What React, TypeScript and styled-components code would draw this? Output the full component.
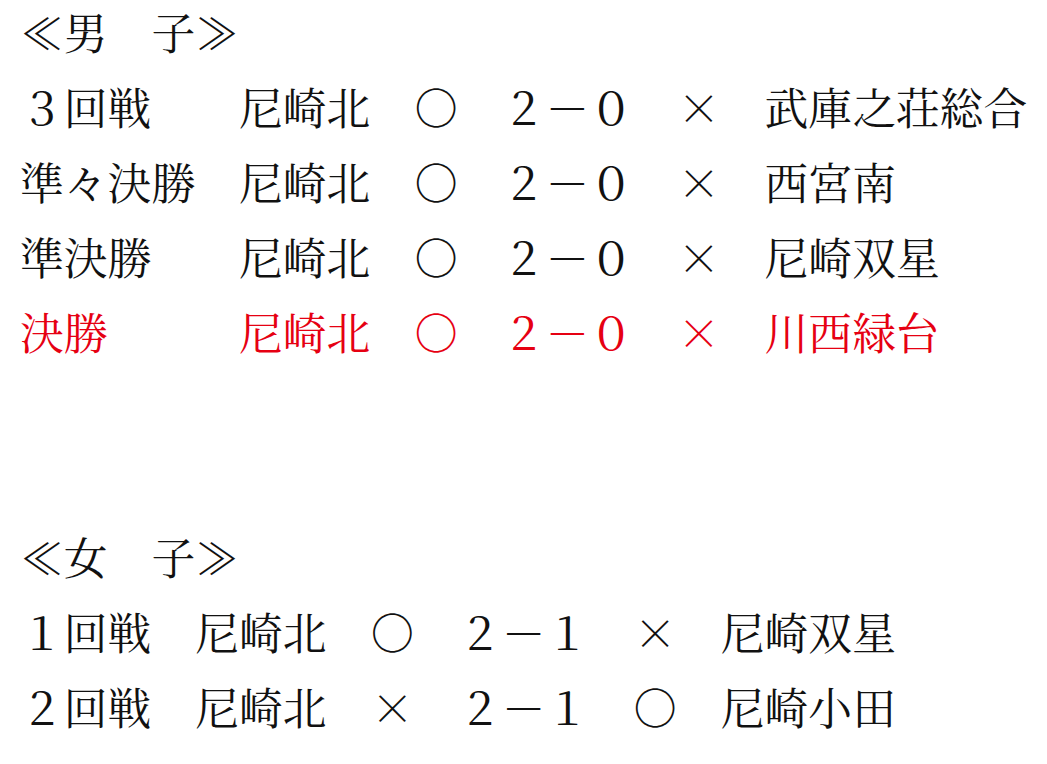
import React from "react";
import styled, { createGlobalStyle } from "styled-components";

const GlobalStyle = createGlobalStyle`
  html, body {
    margin: 0;
    padding: 0;
    background: #ffffff;
  }
  body {
    font-family: "Noto Serif CJK JP", "Noto Sans CJK JP", "Liberation Serif", serif;
    color: #111111;
  }
`;

const Page = styled.div`
  display: flex;
  flex-direction: column;
  gap: 150px;
  padding: 0 0 0 20px;
  margin-top: -6px;
  font-size: 43.8px;
  line-height: 75px;
`;

const Section = styled.section`
  display: flex;
  flex-direction: column;
`;

const Heading = styled.h2`
  margin: 0;
  font-size: inherit;
  font-weight: 400;
  line-height: inherit;
  white-space: pre;
`;

const Row = styled.div<{ $labelEm: number; $final?: boolean }>`
  display: grid;
  grid-template-columns: ${(p) => p.$labelEm}em 4em 2em 4em 2em auto;
  color: ${(p) => (p.$final ? "#e60012" : "#111111")};
  white-space: pre;
`;

const Cell = styled.span`
  display: block;
`;

type Match = {
  round: string;
  mark: string;
  score: string;
  oppMark: string;
  opponent: string;
  final?: boolean;
};

const men: Match[] = [
  { round: "３回戦", mark: "○", score: "２－０", oppMark: "×", opponent: "武庫之荘総合" },
  { round: "準々決勝", mark: "○", score: "２－０", oppMark: "×", opponent: "西宮南" },
  { round: "準決勝", mark: "○", score: "２－０", oppMark: "×", opponent: "尼崎双星" },
  { round: "決勝", mark: "○", score: "２－０", oppMark: "×", opponent: "川西緑台", final: true },
];

const women: Match[] = [
  { round: "１回戦", mark: "○", score: "２－１", oppMark: "×", opponent: "尼崎双星" },
  { round: "２回戦", mark: "×", score: "２－１", oppMark: "○", opponent: "尼崎小田" },
];

const Results = ({ title, matches, labelEm }: { title: string; matches: Match[]; labelEm: number }) => (
  <Section>
    <Heading>{title}</Heading>
    {matches.map((m) => (
      <Row key={m.round} $labelEm={labelEm} $final={m.final}>
        <Cell>{m.round}</Cell>
        <Cell>尼崎北</Cell>
        <Cell>{m.mark}</Cell>
        <Cell>{m.score}</Cell>
        <Cell>{m.oppMark}</Cell>
        <Cell>{m.opponent}</Cell>
      </Row>
    ))}
  </Section>
);

export default function App() {
  return (
    <>
      <GlobalStyle />
      <Page>
        <Results title={"≪男　子≫"} matches={men} labelEm={5} />
        <Results title={"≪女　子≫"} matches={women} labelEm={4} />
      </Page>
    </>
  );
}
